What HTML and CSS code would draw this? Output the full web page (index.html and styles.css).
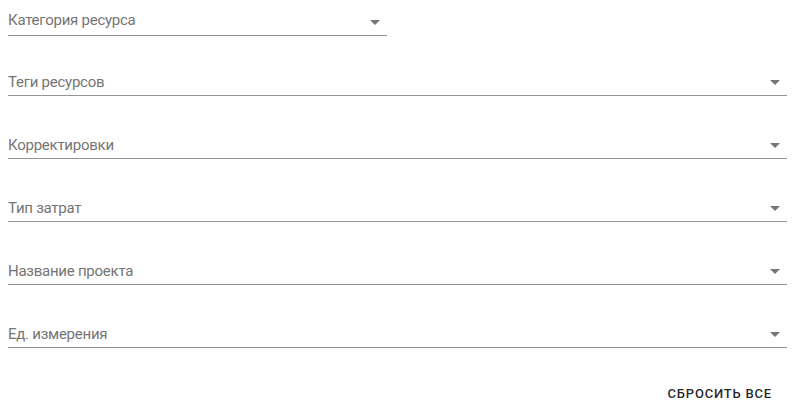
FILE: index.html
```html
<!DOCTYPE html>
<html lang="ru">
<head>
<meta charset="utf-8">
<link rel="stylesheet" href="styles.css">
</head>
<body>
<div class="filters">
  <div class="row-half">
    <div class="select first">
      <span class="label">Категория ресурса</span>
      <svg class="arrow" viewBox="0 0 24 24"><path d="M7 10l5 5 5-5z"/></svg>
    </div>
  </div>
  <div class="select">
    <span class="label">Теги ресурсов</span>
    <svg class="arrow" viewBox="0 0 24 24"><path d="M7 10l5 5 5-5z"/></svg>
  </div>
  <div class="select">
    <span class="label">Корректировки</span>
    <svg class="arrow" viewBox="0 0 24 24"><path d="M7 10l5 5 5-5z"/></svg>
  </div>
  <div class="select">
    <span class="label">Тип затрат</span>
    <svg class="arrow" viewBox="0 0 24 24"><path d="M7 10l5 5 5-5z"/></svg>
  </div>
  <div class="select">
    <span class="label">Название проекта</span>
    <svg class="arrow" viewBox="0 0 24 24"><path d="M7 10l5 5 5-5z"/></svg>
  </div>
  <div class="select">
    <span class="label">Ед. измерения</span>
    <svg class="arrow" viewBox="0 0 24 24"><path d="M7 10l5 5 5-5z"/></svg>
  </div>
  <div class="actions">
    <button class="btn">Сбросить все</button>
  </div>
</div>
</body>
</html>
```

FILE: styles.css
```css
* { box-sizing: border-box; }
html, body { margin: 0; padding: 0; background: #fff; }
body {
  font-family: Roboto, "Liberation Sans", Arial, sans-serif;
  width: 798px;
  height: 414px;
  overflow: hidden;
}
.filters {
  padding: 8px 11px 0 8px;
  display: flex;
  flex-direction: column;
}
.row-half {
  width: 379px;
}
.select {
  position: relative;
  display: flex;
  align-items: center;
  padding: 5px 0 3px 0;
  border-bottom: 1px solid #949494;
  margin-top: 35px;
}
.select.first {
  margin-top: 0;
  padding: 3px 0 5px 0;
}
.row-half + .select { margin-top: 32px; }
.label {
  flex: 1;
  font-size: 15px;
  letter-spacing: -0.25px;
  line-height: 19px;
  color: #757575;
  white-space: nowrap;
}
.arrow {
  position: absolute;
  right: 0;
  bottom: 1px;
  width: 24px;
  height: 24px;
  fill: #757575;
}
.actions {
  display: flex;
  justify-content: flex-end;
  margin-top: 28px;
  padding-right: 7px;
}
.btn {
  font-family: Roboto, "Liberation Sans", Arial, sans-serif;
  font-size: 13px;
  font-weight: 500;
  line-height: 24.5px;
  letter-spacing: 0.8px;
  text-transform: uppercase;
  color: rgba(0,0,0,0.87);
  background: none;
  border: 0;
  padding: 6px 8px;
  cursor: pointer;
}
```
